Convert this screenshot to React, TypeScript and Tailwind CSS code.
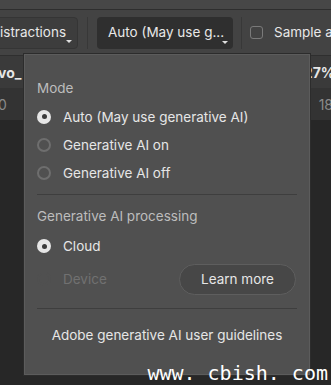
import React from 'react';

const font = { fontFamily: 'Inter, "Open Sans", "Liberation Sans", sans-serif' };

function Radio({ checked, disabled }: { checked?: boolean; disabled?: boolean }) {
  if (checked) {
    return (
      <span className="flex h-[14px] w-[14px] shrink-0 items-center justify-center rounded-full bg-[#e6e6e6]">
        <span className="h-[5px] w-[5px] rounded-full bg-[#3a3a3a]" />
      </span>
    );
  }
  return (
    <span
      className={
        'h-[14px] w-[14px] shrink-0 rounded-full border-2 ' +
        (disabled ? 'border-[#505050]' : 'border-[#6e6e6e]')
      }
    />
  );
}

function Caret() {
  return <span className="absolute bottom-[5px] right-[5px] h-0 w-0 border-x-[3px] border-t-[3px] border-x-transparent border-t-[#e0e0e0]" />;
}

export default function App() {
  const modes = [
    { label: 'Auto (May use generative AI)', checked: true },
    { label: 'Generative AI on' },
    { label: 'Generative AI off' },
  ];

  return (
    <div className="relative h-[385px] w-[331px] overflow-hidden bg-[#272727] text-[13.5px]" style={font}>
      {/* top toolbar */}
      <div className="h-[10px] border-b border-[#2e2e2e] bg-[#474747]" />
      <div className="flex h-[45px] items-center whitespace-nowrap bg-[#434343] text-[13.5px]">
        <div className="relative ml-[-10px] flex h-[32px] w-[88px] shrink-0 items-center rounded-[4px] border border-[#353535] bg-[#3d3d3d] pl-[9px] text-[#e8e8e8]">
          istractions
          <Caret />
        </div>
        <div className="mx-[9px] h-[32px] w-px shrink-0 bg-[#383838]" />
        <div className="relative flex h-[32px] w-[136px] shrink-0 items-center rounded-[4px] bg-[#2f2f2f] pl-[11px] text-[#e8e8e8]">
          Auto (May use g...
          <Caret />
        </div>
        <div className="mx-[8px] h-[32px] w-px shrink-0 bg-[#383838]" />
        <span className="h-[13px] w-[13px] shrink-0 rounded-[3px] border border-[#7a7a7a]" />
        <span className="ml-[11px] text-[#e8e8e8]">Sample a</span>
      </div>
      <div className="flex h-[33px] items-center justify-between border-t border-[#2f2f2f] bg-[#3a3a3a] text-[14px] font-bold text-[#e6e6e6]">
        <span className="ml-[-2px]">vo_</span>
        <span className="mr-[-4px]">27%</span>
      </div>
      <div className="flex h-[32px] items-center justify-between bg-[#333333] text-[14px] text-[#8a8a8a]">
        <span className="ml-[-2px]">0</span>
        <span className="mr-[-2px]">18</span>
      </div>

      {/* popover */}
      <div className="absolute left-[23px] top-[53px] flex h-[323px] w-[288px] flex-col border border-[#2c2c2c] bg-[#505050] px-[13px] shadow-[0_0_0_1px_#5c5c5c_inset]">
        <div className="mt-[24px] text-[#bdbdbd]">Mode</div>
        <div className="mt-[9px] flex flex-col gap-[9px]">
          {modes.map((m) => (
            <div key={m.label} className="flex h-[19px] items-center gap-[12px] text-[#e6e6e6]">
              <Radio checked={m.checked} />
              <span>{m.label}</span>
            </div>
          ))}
        </div>
        <div className="mt-[12px] h-px bg-[#3e3e3e]" />
        <div className="mt-[11px] text-[#bdbdbd]">Generative AI processing</div>
        <div className="mt-[10px] flex h-[19px] items-center gap-[12px] text-[#e6e6e6]">
          <Radio checked />
          <span>Cloud</span>
        </div>
        <div className="mt-[8px] flex items-center justify-between">
          <div className="flex items-center gap-[12px] text-[#717171]">
            <Radio disabled />
            <span>Device</span>
          </div>
          <button className="mr-[1px] h-[31px] w-[117px] rounded-full border border-[#5e5e5e] bg-[#474747] text-[13.5px] text-[#e6e6e6]">
            Learn more
          </button>
        </div>
        <div className="mt-[13px] h-px bg-[#3e3e3e]" />
        <div className="mt-[16px] text-center text-[#e6e6e6]">Adobe generative AI user guidelines</div>
      </div>

      {/* watermark */}
      <div
        className="absolute bottom-[0px] right-[3px] text-[20px] leading-[23px] text-white"
        style={{ fontFamily: '"DejaVu Sans Mono", "Liberation Mono", monospace' }}
      >
        www. cbish. com
      </div>
    </div>
  );
}
